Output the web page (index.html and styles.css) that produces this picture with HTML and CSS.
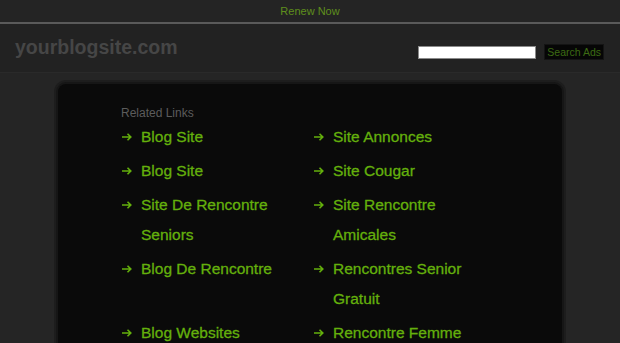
FILE: index.html
```html
<!DOCTYPE html>
<html lang="en">
<head>
    <meta charset="UTF-8">
    <title>yourblogsite.com</title>
    <link rel="stylesheet" href="styles.css">
</head>
<body>
    <div class="topbar"><a href="#" class="renew">Renew Now</a></div>

    <div class="header">
        <div class="logo">yourblogsite.com</div>
        <form class="search">
            <input type="text" class="search-input">
            <button type="button" class="search-btn">Search Ads</button>
        </form>
    </div>

    <div class="main">
        <div class="panel">
            <div class="panel-title">Related Links</div>
            <ul class="links">
                <li><svg class="arrow" viewBox="0 0 10 8"><path d="M0 4H8.5M5.5 0.8L8.8 4L5.5 7.2"/></svg><a href="#">Blog Site</a></li>
                <li><svg class="arrow" viewBox="0 0 10 8"><path d="M0 4H8.5M5.5 0.8L8.8 4L5.5 7.2"/></svg><a href="#">Site Annonces</a></li>
                <li><svg class="arrow" viewBox="0 0 10 8"><path d="M0 4H8.5M5.5 0.8L8.8 4L5.5 7.2"/></svg><a href="#">Blog Site</a></li>
                <li><svg class="arrow" viewBox="0 0 10 8"><path d="M0 4H8.5M5.5 0.8L8.8 4L5.5 7.2"/></svg><a href="#">Site Cougar</a></li>
                <li><svg class="arrow" viewBox="0 0 10 8"><path d="M0 4H8.5M5.5 0.8L8.8 4L5.5 7.2"/></svg><a href="#">Site De Rencontre Seniors</a></li>
                <li><svg class="arrow" viewBox="0 0 10 8"><path d="M0 4H8.5M5.5 0.8L8.8 4L5.5 7.2"/></svg><a href="#">Site Rencontre Amicales</a></li>
                <li><svg class="arrow" viewBox="0 0 10 8"><path d="M0 4H8.5M5.5 0.8L8.8 4L5.5 7.2"/></svg><a href="#">Blog De Rencontre</a></li>
                <li><svg class="arrow" viewBox="0 0 10 8"><path d="M0 4H8.5M5.5 0.8L8.8 4L5.5 7.2"/></svg><a href="#">Rencontres Senior Gratuit</a></li>
                <li><svg class="arrow" viewBox="0 0 10 8"><path d="M0 4H8.5M5.5 0.8L8.8 4L5.5 7.2"/></svg><a href="#">Blog Websites</a></li>
                <li><svg class="arrow" viewBox="0 0 10 8"><path d="M0 4H8.5M5.5 0.8L8.8 4L5.5 7.2"/></svg><a href="#">Rencontre Femme</a></li>
            </ul>
        </div>
    </div>
</body>
</html>
```
FILE: styles.css
```css
body {
    margin: 0; padding: 0;
    background-color: #252525;
    font-family: "Liberation Sans", Arial, sans-serif;
    overflow: hidden;
}

.topbar {
    height: 22px; line-height: 22px; text-align: center;
    background-color: #242424;
    border-bottom: 2px solid #5a5a5a;
    font-size: 11px;
}
.renew { color: #5f8f1c; text-decoration: none; }

.header {
    height: 48px;
    display: flex; justify-content: space-between; align-items: center;
    padding: 0 16px 0 15px;
    background-color: #222222;
    border-bottom: 1px solid #2a2a2a;
}
.logo {
    font-size: 19.5px; font-weight: bold; color: #464646;
    margin-top: -1px;
}
.search { display: flex; align-items: center; gap: 8px; margin-top: 8px; }
.search-input {
    width: 114px; height: 9px; padding: 1px;
    border: 1px solid #8a8a8a; background: #ffffff;
}
.search-btn {
    height: 16px; padding: 0 2px;
    background: #060606; border: 1px solid #141414;
    color: #3d6b13; font-family: inherit; font-size: 10.5px; line-height: 14px;
}

.main { padding-top: 11px; }
.panel {
    width: 504px; margin: 0 auto; height: 300px;
    background-color: #0a0a0a;
    border-radius: 8px;
    box-shadow: 0 0 0 2px #161616, 0 0 0 4px #1d1d1d;
    padding: 21px 0 0 63px; box-sizing: border-box;
}
.panel-title { font-size: 12px; line-height: 16px; color: #5c5c5c; margin-bottom: 1px; }

.links {
    list-style: none; margin: 0; padding: 0;
    display: grid; grid-template-columns: 192px 192px; row-gap: 4px;
}
.links li {
    display: flex; align-items: flex-start;
    font-size: 15.5px; line-height: 30px; color: #64b00c;
}
.links .arrow {
    width: 10px; height: 8px; flex: none;
    margin: 11px 9px 0 1px;
    fill: none; stroke: #64b00c; stroke-width: 1.6;
}
.links a {
    color: #64b00c; text-decoration: none; max-width: 150px;
    -webkit-text-stroke: 0.3px #64b00c;
}
```
